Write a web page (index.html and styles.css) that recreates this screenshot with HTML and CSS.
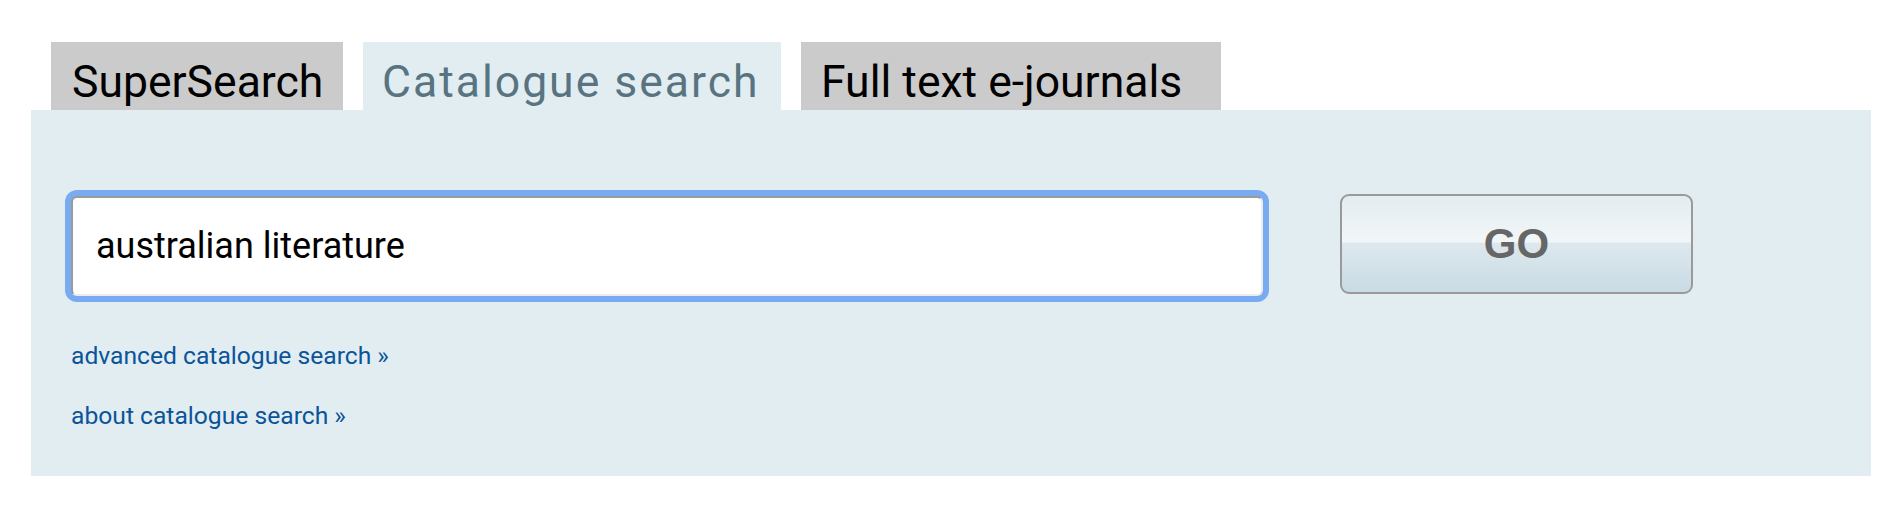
FILE: index.html
```html
<!DOCTYPE html>
<html lang="en">
<head>
<meta charset="utf-8">
<title>Catalogue search</title>
<link rel="stylesheet" href="styles.css">
</head>
<body>
<div class="search">
  <div class="tabs">
    <a class="tab tab-super" href="#">SuperSearch</a>
    <a class="tab tab-catalogue tab-active" href="#">Catalogue search</a>
    <a class="tab tab-journals" href="#">Full text e-journals</a>
  </div>
  <div class="panel">
    <form class="row" onsubmit="return false">
      <input class="query" type="text" value="australian literature">
      <button class="go" type="submit">GO</button>
    </form>
    <a class="link link-first" href="#">advanced catalogue search »</a>
    <a class="link" href="#">about catalogue search »</a>
  </div>
</div>
</body>
</html>
```

FILE: styles.css
```css
* { box-sizing: border-box; }

body {
  margin: 0;
  background: #ffffff;
  font-family: Roboto, "Liberation Sans", Arial, sans-serif;
}

.search {
  margin: 42px 33px 0 31px;
}

.tabs {
  display: flex;
  gap: 20px;
  padding-left: 20px;
}

.tab {
  display: block;
  height: 68px;
  padding: 14px 0 0 21px;
  background: #cbcbcb;
  color: #000000;
  font-size: 44.5px;
  line-height: 52px;
  text-decoration: none;
  white-space: nowrap;
  overflow: hidden;
}

.tab-super { width: 292px; }
.tab-catalogue { width: 418px; padding-left: 19px; }
.tab-journals { width: 420px; padding-left: 20px; }

.tab-active {
  background: #e2edf2;
  color: #587480;
  letter-spacing: 2px;
}

.panel {
  background: #e2edf2;
  padding: 86px 0 46px 40px;
}

.row {
  display: flex;
  align-items: flex-start;
  gap: 77px;
  margin: 0;
}

.query {
  width: 1192px;
  height: 100px;
  margin: 0;
  padding: 0 0 0 23px;
  border: 2px solid;
  border-color: #9a9a9a #ececec #ececec #9a9a9a;
  border-radius: 6px;
  box-shadow: 0 0 0 6px #78abf0;
  background: #ffffff;
  color: #000000;
  font-family: Roboto, "Liberation Sans", Arial, sans-serif;
  font-size: 36px;
  outline: none;
}

.go {
  width: 353px;
  height: 100px;
  margin: -2px 0 0 0;
  border: 2px solid #9a9a9a;
  border-radius: 9px;
  background: linear-gradient(to bottom, #e3ecf0 0%, #f2f6f8 48%, #dde8ee 49%, #c9dbe4 100%);
  color: #666666;
  font-family: "Liberation Sans", Arial, sans-serif;
  font-weight: bold;
  font-size: 42px;
  cursor: pointer;
}

.link {
  display: block;
  width: max-content;
  margin-top: 32px;
  color: #0a5499;
  font-size: 24.65px;
  line-height: 28px;
  text-decoration: none;
}

.link-first {
  margin-top: 46px;
}
```
